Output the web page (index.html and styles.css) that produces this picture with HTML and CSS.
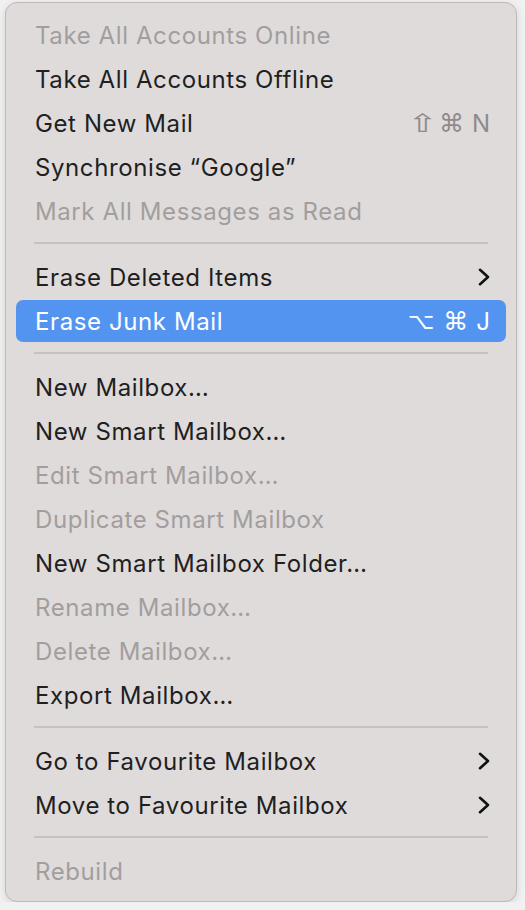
FILE: index.html
```html
<!DOCTYPE html>
<html lang="en">
<head>
    <meta charset="UTF-8">
    <meta name="viewport" content="width=device-width, initial-scale=1.0">
    <title>Mailbox menu</title>
    <link rel="stylesheet" href="styles.css">
</head>
<body>
    <div class="menu">
        <div class="item disabled"><span class="label">Take All Accounts Online</span></div>
        <div class="item"><span class="label">Take All Accounts Offline</span></div>
        <div class="item">
            <span class="label">Get New Mail</span>
            <span class="keys muted"><span class="sym shift">⇧</span><span class="sym cmd">⌘</span><span class="key">N</span></span>
        </div>
        <div class="item"><span class="label">Synchronise “Google”</span></div>
        <div class="item disabled"><span class="label">Mark All Messages as Read</span></div>

        <div class="sep"></div>

        <div class="item">
            <span class="label">Erase Deleted Items</span>
            <svg class="chevron" viewBox="0 0 12 18"><path d="M2 1.8 L10 9 L2 16.2"/></svg>
        </div>
        <div class="item active">
            <span class="label">Erase Junk Mail</span>
            <span class="keys"><span class="sym opt">⌥</span><span class="sym cmd">⌘</span><span class="key">J</span></span>
        </div>

        <div class="sep"></div>

        <div class="item"><span class="label">New Mailbox…</span></div>
        <div class="item"><span class="label">New Smart Mailbox…</span></div>
        <div class="item disabled"><span class="label">Edit Smart Mailbox…</span></div>
        <div class="item disabled"><span class="label">Duplicate Smart Mailbox</span></div>
        <div class="item"><span class="label">New Smart Mailbox Folder…</span></div>
        <div class="item disabled"><span class="label">Rename Mailbox…</span></div>
        <div class="item disabled"><span class="label">Delete Mailbox…</span></div>
        <div class="item"><span class="label">Export Mailbox…</span></div>

        <div class="sep"></div>

        <div class="item">
            <span class="label">Go to Favourite Mailbox</span>
            <svg class="chevron" viewBox="0 0 12 18"><path d="M2 1.8 L10 9 L2 16.2"/></svg>
        </div>
        <div class="item">
            <span class="label">Move to Favourite Mailbox</span>
            <svg class="chevron" viewBox="0 0 12 18"><path d="M2 1.8 L10 9 L2 16.2"/></svg>
        </div>

        <div class="sep"></div>

        <div class="item disabled"><span class="label">Rebuild</span></div>
    </div>
</body>
</html>
```

FILE: styles.css
```css
body, html {
    margin: 0;
    padding: 0;
    background-color: #f1f1f1;
    font-family: Inter, 'Noto Sans', sans-serif;
}

.menu {
    width: 512px;
    margin: 2px 0 0 5px;
    box-sizing: border-box;
    padding: 10px 10px 8px 10px;
    background-color: #e0dbdb;
    border: 1px solid #bdb9b9;
    border-radius: 12px;
    box-shadow: 0 2px 8px rgba(0, 0, 0, 0.12);
    display: flex;
    flex-direction: column;
}

.item {
    height: 44px;
    display: flex;
    align-items: center;
    justify-content: space-between;
    padding: 0 16px 0 19px;
    font-size: 24px;
    letter-spacing: 0.6px;
    color: #211f1f;
}

.item.disabled {
    color: #a29e9e;
}

.item.active {
    height: 42px;
    margin: 1px 0;
    border-radius: 7px;
    background-color: #5394f0;
    color: #ffffff;
}

.keys {
    display: flex;
    align-items: center;
    letter-spacing: 0;
}

.keys .sym {
    font-family: 'DejaVu Sans', sans-serif;
    font-size: 25px;
    line-height: 1;
    margin-right: 6px;
}

.keys .opt {
    font-size: 23px;
    margin-right: 9px;
}

.keys .shift {
    display: inline-block;
    transform: scaleX(1.5);
    margin: 0 6px 0 0;
}

.keys .key {
    font-size: 24px;
    margin-left: 2px;
}

.keys.muted {
    color: #8f8b8b;
}

.chevron {
    width: 12px;
    height: 18px;
    fill: none;
    stroke: #111;
    stroke-width: 2.6;
    stroke-linecap: round;
    stroke-linejoin: round;
}

.sep {
    height: 22px;
    box-sizing: border-box;
    padding: 9px 18px 0 18px;
}

.sep::before {
    content: "";
    display: block;
    height: 2px;
    background-color: #c7c2c2;
}
```
